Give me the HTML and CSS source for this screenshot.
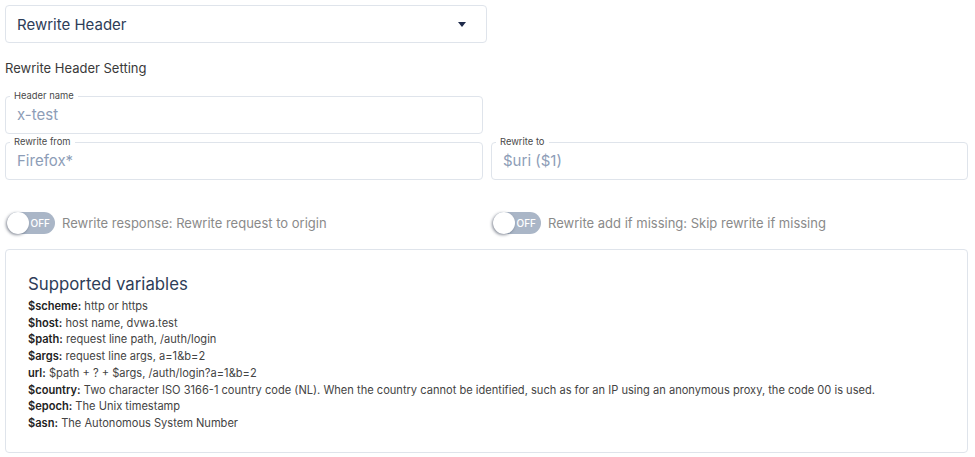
FILE: index.html
```html
<!DOCTYPE html>
<html>
<head>
<meta charset="utf-8">
<link rel="stylesheet" href="styles.css">
</head>
<body>
<div class="page">
  <div class="select">
    <span class="select-text">Rewrite Header</span>
    <span class="caret"></span>
  </div>
  <div class="section-title">Rewrite Header Setting</div>
  <div class="fields">
    <fieldset class="field">
      <legend>Header name</legend>
      <div class="value">x-test</div>
    </fieldset>
    <div></div>
    <fieldset class="field">
      <legend>Rewrite from</legend>
      <div class="value">Firefox*</div>
    </fieldset>
    <fieldset class="field">
      <legend>Rewrite to</legend>
      <div class="value">$uri ($1)</div>
    </fieldset>
  </div>
  <div class="toggles">
    <div class="toggle-item">
      <div class="toggle"><span class="knob"></span><span class="off">OFF</span></div>
      <span class="toggle-label">Rewrite response: Rewrite request to origin</span>
    </div>
    <div class="toggle-item">
      <div class="toggle"><span class="knob"></span><span class="off">OFF</span></div>
      <span class="toggle-label">Rewrite add if missing: Skip rewrite if missing</span>
    </div>
  </div>
  <div class="card">
    <div class="card-title">Supported variables</div>
    <div class="line"><b>$scheme:</b> http or https</div>
    <div class="line"><b>$host:</b> host name, dvwa.test</div>
    <div class="line"><b>$path:</b> request line path, /auth/login</div>
    <div class="line"><b>$args:</b> request line args, a=1&amp;b=2</div>
    <div class="line"><b>url:</b> $path + ? + $args, /auth/login?a=1&amp;b=2</div>
    <div class="line"><b>$country:</b> Two character ISO 3166-1 country code (NL). When the country cannot be identified, such as for an IP using an anonymous proxy, the code 00 is used.</div>
    <div class="line"><b>$epoch:</b> The Unix timestamp</div>
    <div class="line"><b>$asn:</b> The Autonomous System Number</div>
  </div>
</div>
</body>
</html>
```
FILE: styles.css
```css
* { box-sizing: border-box; }
html, body { margin: 0; padding: 0; background: #fff; }
body { font-family: Inter, "Noto Sans", sans-serif; color: #333; }
.page { padding: 5px 7px 0 5px; width: 975px; }

.select {
  width: 482px;
  height: 38px;
  border: 1px solid #dfe4eb;
  border-radius: 4px;
  display: flex;
  align-items: center;
  justify-content: space-between;
  padding: 0 20px 0 11px;
}
.select-text { font-size: 15px; color: #2e3d58; }
.caret {
  width: 0; height: 0;
  border-left: 4px solid transparent;
  border-right: 4px solid transparent;
  border-top: 5px solid #1e2a4a;
}

.section-title {
  margin-top: 15px;
  font-size: 13px;
  line-height: 20px;
  color: #3a3a3a;
}

.fields {
  margin-top: 12px;
  display: grid;
  grid-template-columns: 478px 477px;
  column-gap: 8px;
  row-gap: 2px;
}
.field {
  margin: 0;
  min-width: 0;
  border: 1px solid #dfe4eb;
  border-radius: 4px;
  padding: 0 11px 5px 11px;
}
.field legend {
  font-size: 9.4px;
  line-height: 12px;
  color: #4a4a4a;
  padding: 0 4px;
  margin-left: -7px;
}
.value {
  height: 26px;
  line-height: 26px;
  font-size: 15px;
  color: #8d9db7;
}

.toggles {
  margin-top: 31px;
  display: grid;
  grid-template-columns: 478px 477px;
  column-gap: 8px;
  height: 24px;
}
.toggle-item { display: flex; align-items: center; padding-left: 2px; }
.toggle {
  position: relative;
  width: 48px;
  height: 22px;
  border-radius: 11px;
  background: #aab6c7;
  display: flex;
  align-items: center;
  justify-content: flex-end;
  padding-right: 5px;
}
.knob {
  position: absolute;
  left: 0; top: 0;
  width: 22px; height: 22px;
  border-radius: 50%;
  background: #fff;
  box-shadow: -1px 1px 3px rgba(40,50,70,0.55);
}
.off { font-size: 10px; color: #fff; font-weight: 500; }
.toggle-label { margin-left: 7px; font-size: 13px; color: #8a8a8a; }

.card {
  margin-top: 14px;
  width: 963px;
  height: 204px;
  border: 1px solid #dfe4eb;
  border-radius: 4px;
  padding: 23px 22px 0 22px;
}
.card-title {
  font-size: 16.8px;
  line-height: 22px;
  color: #2e3d58;
  margin-bottom: 3px;
}
.line {
  font-size: 11.1px;
  line-height: 16.7px;
  color: #444;
  white-space: nowrap;
}
.line b { color: #222; font-weight: 600; }
```
